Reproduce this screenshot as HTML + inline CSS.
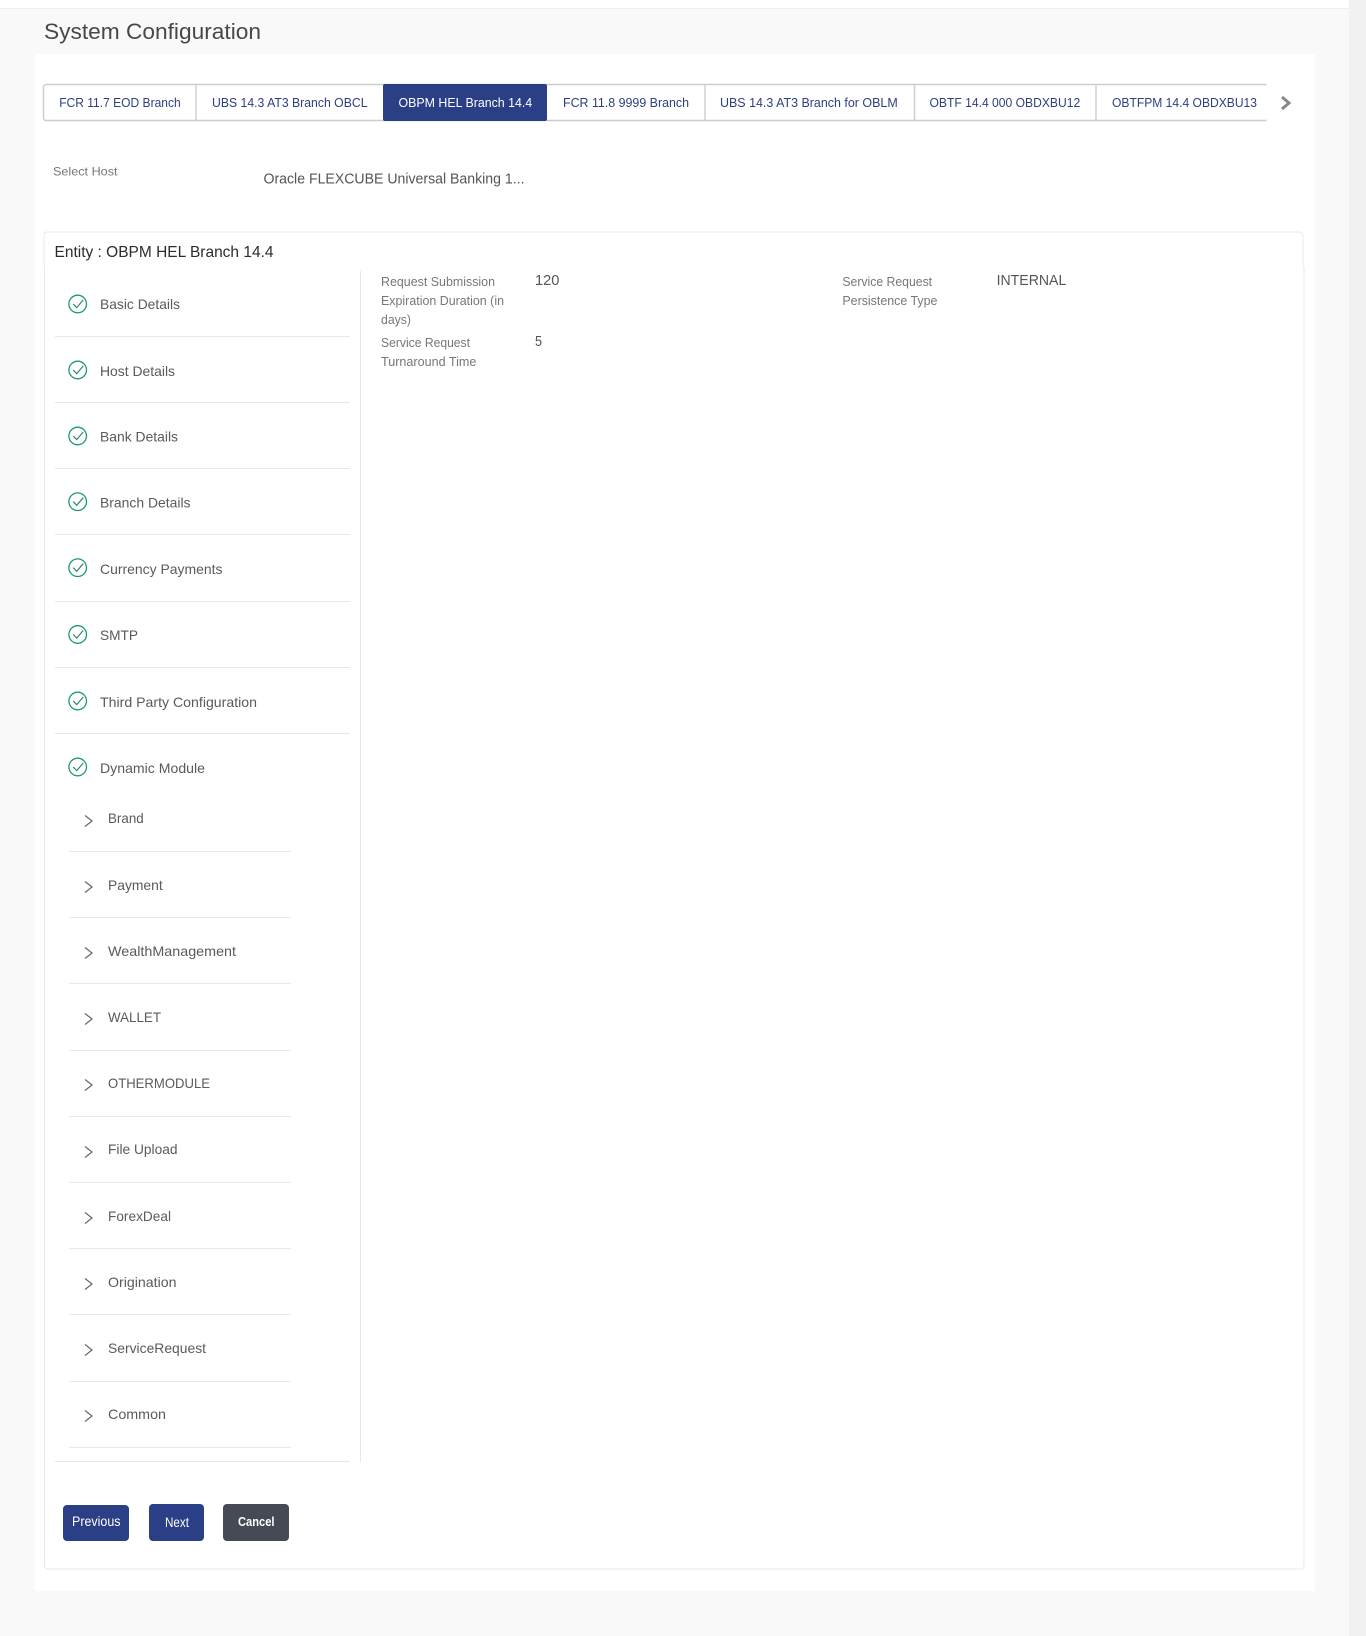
<!DOCTYPE html>
<html lang="en"><head><meta charset="utf-8"><title>System Configuration</title>
<style>
html,body{margin:0;padding:0;background:#f9f9f9;width:1366px;height:1636px;overflow:hidden}
svg{display:block}
text{font-family:"Liberation Sans",Arial,sans-serif;white-space:pre}
.tab{font-size:13px;fill:#2d3f80}
.nav{font-size:14px;fill:#5a5a5a}
.sub{font-size:14px;fill:#5a5a5a}
.lab{font-size:13px;fill:#777}
.val{font-size:15px;fill:#555}
.ln{stroke:#e8e8e8;stroke-width:1;fill:none}
</style></head><body>
<svg xmlns="http://www.w3.org/2000/svg" width="1366" height="1636" viewBox="0 0 1366 1636">
<defs>
<g id="ok"><circle r="8.8" fill="none" stroke="#1b9a70" stroke-width="1.3"/><path d="M-4.500 0L-1 3.600 5.500-4" fill="none" stroke="#2f8a66" stroke-width="1.2"/></g>
<path id="chev" d="M-3.500-5.500L3.500 0-3.500 5.500" fill="none" stroke="#666" stroke-width="1.2"/>
</defs>
<rect width="1366" height="1636" fill="#f9f9f9"/>
<rect width="1349" height="8" fill="#fff"/>
<rect y="8" width="1349" height="1" fill="#eee"/>
<rect x="1349" width="17" height="1636" fill="#f1f1f1"/>
<text x="44" y="39" font-size="22" fill="#484848" textLength="217" lengthAdjust="spacingAndGlyphs">System Configuration</text>
<rect x="35" y="54" width="1280" height="1537" fill="#fff"/>

<!-- tabs -->
<path d="M1266.500 84.500H46a2.500 2.500 0 0 0-2.500 2.500v31a2.500 2.500 0 0 0 2.500 2.500H1266.500" fill="none" stroke="#ccc" stroke-width="1.400"/>
<path d="M196 85V120M705 85V120M914.500 85V120M1096 85V120" stroke="#ccc" stroke-width="1.400"/>
<rect x="383" y="84" width="164" height="37" rx="2" fill="#2a3f85"/>
<text class="tab" x="59.200" y="107" textLength="121.500" lengthAdjust="spacingAndGlyphs">FCR 11.7 EOD Branch</text>
<text class="tab" x="212" y="107" textLength="155.500" lengthAdjust="spacingAndGlyphs">UBS 14.3 AT3 Branch OBCL</text>
<text class="tab" x="398.500" y="107" textLength="133.700" lengthAdjust="spacingAndGlyphs" style="fill:#fff">OBPM HEL Branch 14.4</text>
<text class="tab" x="563" y="107" textLength="126" lengthAdjust="spacingAndGlyphs">FCR 11.8 9999 Branch</text>
<text class="tab" x="720" y="107" textLength="177.700" lengthAdjust="spacingAndGlyphs">UBS 14.3 AT3 Branch for OBLM</text>
<text class="tab" x="929.500" y="107" textLength="150.700" lengthAdjust="spacingAndGlyphs">OBTF 14.4 000 OBDXBU12</text>
<text class="tab" x="1112" y="107" textLength="145" lengthAdjust="spacingAndGlyphs">OBTFPM 14.4 OBDXBU13</text>
<path d="M1282 97L1289 103 1282 109" fill="none" stroke="#888" stroke-width="3"/>

<!-- host -->
<text x="53" y="175.500" font-size="12" fill="#777" textLength="64.500" lengthAdjust="spacingAndGlyphs">Select Host</text>
<text x="263.500" y="183.500" font-size="15" fill="#555" textLength="261" lengthAdjust="spacingAndGlyphs">Oracle FLEXCUBE Universal Banking 1...</text>

<!-- entity box -->
<path d="M44 266V235a3 3 0 0 1 3-3H1300a3 3 0 0 1 3 3V266" class="ln"/>
<path d="M44.500 266V1566a3 3 0 0 0 3 3H1301a3 3 0 0 0 3-3V266" class="ln"/>
<text x="54.500" y="257" font-size="16" fill="#2c2c2c" textLength="219" lengthAdjust="spacingAndGlyphs">Entity : OBPM HEL Branch 14.4</text>

<path d="M360.500 271V1462" class="ln"/>
<path class="ln" d="M55 336.500H350M55 402.500H350M55 468.500H350M55 534.500H350M55 601.500H350M55 667.500H350M55 733.500H350M55 1461.500H350"/>
<path class="ln" d="M69 851.500H291M69 917.500H291M69 983.500H291M69 1050.500H291M69 1116.500H291M69 1182.500H291M69 1248.500H291M69 1314.500H291M69 1381.500H291M69 1447.500H291"/>

<use href="#ok" x="77.700" y="304"/>
<use href="#ok" x="77.700" y="370"/>
<use href="#ok" x="77.700" y="436"/>
<use href="#ok" x="77.700" y="501.700"/>
<use href="#ok" x="77.700" y="567.700"/>
<use href="#ok" x="77.700" y="634.500"/>
<use href="#ok" x="77.700" y="701"/>
<use href="#ok" x="77.700" y="767"/>
<text class="nav" x="100" y="309" textLength="80" lengthAdjust="spacingAndGlyphs">Basic Details</text>
<text class="nav" x="100" y="376" textLength="75" lengthAdjust="spacingAndGlyphs">Host Details</text>
<text class="nav" x="100" y="441.500" textLength="78" lengthAdjust="spacingAndGlyphs">Bank Details</text>
<text class="nav" x="100" y="507.500" textLength="90.500" lengthAdjust="spacingAndGlyphs">Branch Details</text>
<text class="nav" x="100" y="574" textLength="122.500" lengthAdjust="spacingAndGlyphs">Currency Payments</text>
<text class="nav" x="100" y="640" textLength="38" lengthAdjust="spacingAndGlyphs">SMTP</text>
<text class="nav" x="100" y="707" textLength="157" lengthAdjust="spacingAndGlyphs">Third Party Configuration</text>
<text class="nav" x="100" y="773" textLength="105" lengthAdjust="spacingAndGlyphs">Dynamic Module</text>

<use href="#chev" x="88.500" y="821"/>
<use href="#chev" x="88.500" y="887"/>
<use href="#chev" x="88.500" y="953"/>
<use href="#chev" x="88.500" y="1019"/>
<use href="#chev" x="88.500" y="1085"/>
<use href="#chev" x="88.500" y="1152"/>
<use href="#chev" x="88.500" y="1218"/>
<use href="#chev" x="88.500" y="1284"/>
<use href="#chev" x="88.500" y="1350"/>
<use href="#chev" x="88.500" y="1416"/>
<text class="sub" x="108" y="823" textLength="35.700" lengthAdjust="spacingAndGlyphs">Brand</text>
<text class="sub" x="108" y="890" textLength="54.700" lengthAdjust="spacingAndGlyphs">Payment</text>
<text class="sub" x="108" y="956" textLength="128" lengthAdjust="spacingAndGlyphs">WealthManagement</text>
<text class="sub" x="108" y="1022" textLength="53" lengthAdjust="spacingAndGlyphs">WALLET</text>
<text class="sub" x="108" y="1088" textLength="102" lengthAdjust="spacingAndGlyphs">OTHERMODULE</text>
<text class="sub" x="108" y="1154" textLength="69.500" lengthAdjust="spacingAndGlyphs">File Upload</text>
<text class="sub" x="108" y="1221" textLength="63" lengthAdjust="spacingAndGlyphs">ForexDeal</text>
<text class="sub" x="108" y="1287" textLength="68.500" lengthAdjust="spacingAndGlyphs">Origination</text>
<text class="sub" x="108" y="1353" textLength="98" lengthAdjust="spacingAndGlyphs">ServiceRequest</text>
<text class="sub" x="108" y="1419" textLength="58" lengthAdjust="spacingAndGlyphs">Common</text>

<!-- details -->
<text class="lab" x="381" y="286" textLength="114" lengthAdjust="spacingAndGlyphs">Request Submission</text>
<text class="lab" x="381" y="305" textLength="123" lengthAdjust="spacingAndGlyphs">Expiration Duration (in</text>
<text class="lab" x="381" y="324" textLength="30" lengthAdjust="spacingAndGlyphs">days)</text>
<text class="lab" x="381" y="347" textLength="89" lengthAdjust="spacingAndGlyphs">Service Request</text>
<text class="lab" x="381" y="366" textLength="95.400" lengthAdjust="spacingAndGlyphs">Turnaround Time</text>
<text class="val" x="535" y="285" textLength="24.400" lengthAdjust="spacingAndGlyphs">120</text>
<text class="val" x="535" y="346" textLength="7" lengthAdjust="spacingAndGlyphs">5</text>
<text class="lab" x="842.400" y="286" textLength="89.700" lengthAdjust="spacingAndGlyphs">Service Request</text>
<text class="lab" x="842.400" y="305" textLength="95" lengthAdjust="spacingAndGlyphs">Persistence Type</text>
<text class="val" x="996.600" y="285" textLength="69.700" lengthAdjust="spacingAndGlyphs">INTERNAL</text>

<!-- buttons -->
<rect x="63" y="1505" width="66" height="36" rx="4" fill="#2a3f85"/>
<rect x="149" y="1504" width="55" height="37" rx="4" fill="#2a3f85"/>
<rect x="223" y="1504" width="66" height="37" rx="4" fill="#454a54"/>
<text x="72" y="1526" font-size="14" fill="#fff" textLength="48.500" lengthAdjust="spacingAndGlyphs">Previous</text>
<text x="165" y="1527" font-size="14" fill="#fff" textLength="24" lengthAdjust="spacingAndGlyphs">Next</text>
<text x="238" y="1526" font-size="13" font-weight="bold" fill="#fff" textLength="36.500" lengthAdjust="spacingAndGlyphs">Cancel</text>
</svg>
</body></html>
